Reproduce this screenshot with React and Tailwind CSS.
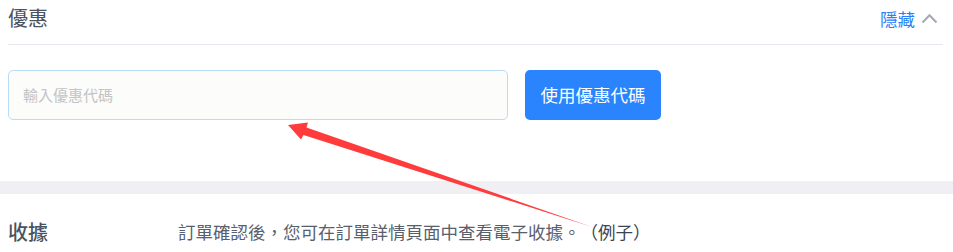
export default function App() {
  return (
    <div
      className="relative w-[953px] h-[252px] bg-white overflow-hidden [text-spacing-trim:space-all]"
      style={{ fontFamily: '"Noto Sans CJK TC", "Noto Sans", sans-serif' }}
    >
      <div className="pl-2 pr-[10px]">
        <div className="flex justify-between items-start h-[45px] border-b border-[#e4e7eb]">
          <div className="pt-[4px] text-[20px] leading-[28px] text-[#4a525e]">優惠</div>
          <div className="flex items-start pt-[5px] pr-[5px]">
            <span className="text-[17.5px] leading-[28px] text-[#2b7ff8]">隱藏</span>
            <svg className="ml-[6px] mt-[8px]" width="17" height="11" viewBox="0 0 17 11" fill="none">
              <path d="M1.5 9.5 L8.5 2.2 L15.5 9.5" stroke="#a3aab3" strokeWidth="2" />
            </svg>
          </div>
        </div>
        <div className="flex mt-[25px] gap-[17px]">
          <div className="w-[500px] h-[50px] rounded-[5px] border border-[#b8dcf4] bg-[#fcfcfa] flex items-center pl-[14px]">
            <span className="text-[15px] text-[#c3c4c6]">輸入優惠代碼</span>
          </div>
          <button className="w-[136px] h-[50px] rounded-[5px] bg-[#2a84fe] text-white text-[17.5px] flex items-center justify-center">
            使用優惠代碼
          </button>
        </div>
      </div>
      <div className="mt-[61px] h-[13px] bg-[#efeff4]" />
      <div className="flex pl-2 pt-[24px]">
        <div className="w-[170px] text-[20px] leading-[28px] font-medium text-[#4a525e]">收據</div>
        <div className="text-[17.5px] leading-[28px] text-[#58606c]">
          訂單確認後，您可在訂單詳情頁面中查看電子收據。<span className="text-[#3a4350]">（例子）</span>
        </div>
      </div>
      <svg
        className="absolute left-0 top-0 pointer-events-none"
        width="953"
        height="252"
        viewBox="0 0 953 252"
      >
        <polygon
          points="288,125 308,122.5 306.5,127.5 592,227 303.5,135 301,139.5"
          fill="#ff3b3b"
        />
      </svg>
    </div>
  );
}
